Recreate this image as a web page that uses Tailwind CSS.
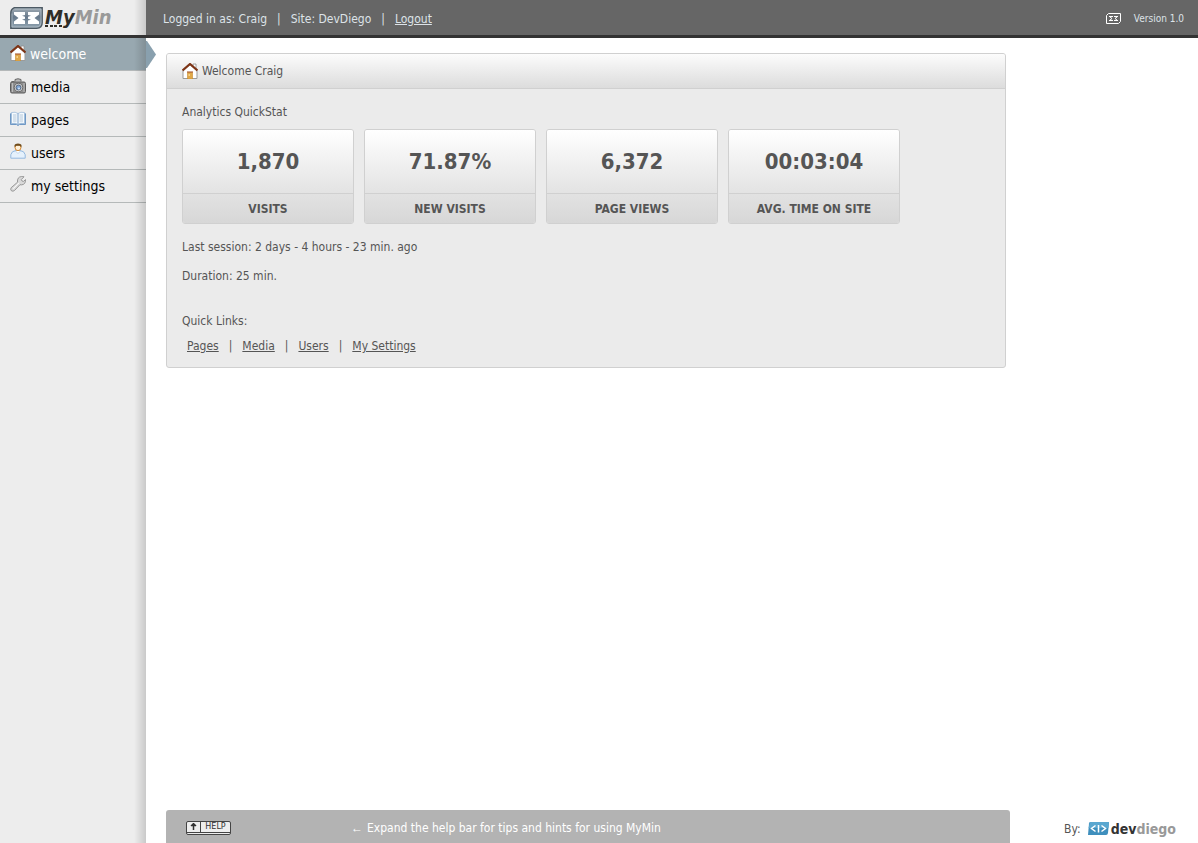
<!DOCTYPE html>
<html lang="en">
  <head>
    <meta charset="UTF-8" />
    <meta name="viewport" content="width=device-width, initial-scale=1.0" />
    <script src="https://cdn.jsdelivr.net/npm/@tailwindcss/browser@4"></script>
    <title>MyMin</title>
  </head>
  <body class="flex flex-col min-h-screen bg-white font-['DejaVu_Sans_Condensed','DejaVu_Sans',sans-serif] text-[12px] leading-4 text-[#555]">
    <!-- shared house icon -->
    <svg class="hidden">
      <symbol id="house" viewBox="0 0 16 16">
        <path d="M11 1h3v5l-3-3z" fill="#fff" stroke="#8d8d8d" stroke-width=".8" />
        <path d="M1 8L8 1.500 15 8v7.500H1z" fill="#fff" stroke="#9b9b9b" />
        <path d="M5.500 9.500h5V16h-5z" fill="#e0a848" stroke="#c98a2c" stroke-width=".6" />
        <path d="M6.500 11h1.500v2h-1.500z" fill="#f5d08a" />
        <path d="M5 9h6" stroke="#a34a1c" />
        <path d="M0.500 7.500L8 1l7.500 6.500" fill="none" stroke="#7e3516" stroke-width="2.200" />
      </symbol>
    </svg>

    <header class="flex h-[38px] border-b-3 border-[#333] bg-[#666] text-[#dde3e8]">
      <a href="#" class="relative flex w-[146px] shrink-0 items-center bg-[#ededed] pl-[10px]">
        <svg class="h-[22px] w-[33px]" viewBox="0 0 33 22">
          <defs>
            <linearGradient id="badge" x1="0" y1="0" x2="0" y2="1">
              <stop offset="0" stop-color="#a3adb5" />
              <stop offset=".45" stop-color="#66788a" />
              <stop offset="1" stop-color="#93a6b3" />
            </linearGradient>
          </defs>
          <path d="M4 .8h28.200v14.700q0 5.700-5.500 5.700H.8V6q0-4 3.200-5.200z" fill="url(#badge)" stroke="#4d5a64" stroke-width="1.400" />
          <path d="M4.500 2h26.500v13q0 5-5 5H2V6.500" fill="none" stroke="#b4c0c9" stroke-width=".8" />
          <path d="M4 5h11v3l-3 .8 3 1v2l-3 1 3 .8V17H4v-2.500L8.500 11 4 7.500zM18 5h11v2.500L24.500 11l4.500 3.500V17H18v-3.400l3-.8-3-1v-2l3-1-3-.8z" fill="#fff" />
        </svg>
        <span class="pl-[2px] pb-[2px] text-[20px] leading-5 font-bold italic text-[#2e2d28]">My<span class="text-[#999]">Min</span></span>
        <svg class="absolute left-[45px] top-[25px] h-[2px] w-[17px]" viewBox="0 0 17 2">
          <path d="M0 0h3v2H0zM5 0h3v2H5zM9 0h3v2H9zM14 0h3v2h-3z" fill="#2e2d28" />
        </svg>
        <span class="absolute inset-y-0 right-0 w-3 bg-linear-to-r from-transparent to-black/15"></span>
      </a>
      <div class="flex flex-1 items-center gap-[10px] pl-[17px] pt-[2px]">
        <span>Logged in as: Craig</span>
        <span>|</span>
        <span>Site: DevDiego</span>
        <span>|</span>
        <a href="#" class="underline">Logout</a>
      </div>
      <div class="flex items-center gap-[13px] pr-[14px] pt-[2px] text-[10px]">
        <svg class="h-[11px] w-[15px]" viewBox="0 0 15 11" fill="none" stroke="#fff">
          <path d="M2.500.5h12v8l-2 2H.5v-8z" />
          <path d="M3 3.500h4M3 7.500h4M4 4l2 1.500L4 7M8 3.500h4M8 7.500h4M11 4l-2 1.500 2 1.500" />
        </svg>
        <span>Version 1.0</span>
      </div>
    </header>

    <div class="flex flex-1">
      <nav class="relative w-[146px] shrink-0 bg-[#ededed] text-[14px] text-black">
        <a href="#" class="flex h-[33px] items-center gap-1 border-b border-[#b4b8b9] bg-[#98a8b0] pl-[10px] text-white">
          <svg class="mb-[2px] size-4"><use href="#house" /></svg>
          welcome
        </a>
        <a href="#" class="flex h-[33px] items-center gap-[5px] border-b border-[#b5b9b9] pl-[10px]">
          <svg class="mb-[2px] size-4" viewBox="0 0 16 16">
            <path d="M5 3.500V1.500q3-1.500 6 0v2" fill="#bbb" stroke="#666" />
            <path d="M1.500 3h3v2h-3z" fill="#777" />
            <rect x=".5" y="4" width="15" height="11" rx="1.500" fill="#8f8f8f" stroke="#5c5c5c" />
            <path d="M2.500 5v9M14 5v9" stroke="#bbb" />
            <circle cx="8.500" cy="9.500" r="4.300" fill="#d5d5d5" stroke="#666" />
            <circle cx="8.500" cy="9.500" r="2.500" fill="#7da3d3" stroke="#54657c" />
            <circle cx="9" cy="10.500" r="1" fill="#d3e5f8" />
          </svg>
          media
        </a>
        <a href="#" class="flex h-[33px] items-center gap-[5px] border-b border-[#b5b9b9] pl-[10px]">
          <svg class="mb-[2px] size-4" viewBox="0 0 16 16">
            <path d="M.5 2.500v11h6l1.500 1 1.500-1h6v-11" fill="#7ea6d0" stroke="#6f98c5" />
            <path d="M1.500 1.500Q5.500.5 8 2.500 10.500.5 14.500 1.500v11Q10.500 11.500 8 13.500 5.500 11.500 1.500 12.500z" fill="#f5fafe" stroke="#9dbad8" stroke-width=".8" />
            <path d="M8 2.500v11" stroke="#7ba0c9" />
            <path d="M3 4h3.500M3 6h3.500M3 8h3.500M3 10h3.500M9.500 4H13M9.500 6H13M9.500 8H13M9.500 10H13" stroke="#aec2d6" stroke-width=".9" />
          </svg>
          pages
        </a>
        <a href="#" class="flex h-[33px] items-center gap-[5px] border-b border-[#b5b9b9] pl-[10px]">
          <svg class="mb-1 size-4" viewBox="0 0 16 16">
            <path d="M.8 15.200v-3.500Q1.500 8 6 7.500h4q4.500.5 5.200 4.200v3.500z" fill="#e5f1fc" stroke="#94b9df" />
            <path d="M5.500 8L8 10.500 10.500 8" fill="#fff" stroke="#a8c6e4" stroke-width=".7" />
            <circle cx="8" cy="4.700" r="2.900" fill="#fff0d8" stroke="#d58a35" />
            <path d="M4.500 4.500V2Q5 .5 8 .5t3.500 1.500v2.500L10 2.800H6z" fill="#704c1b" />
          </svg>
          users
        </a>
        <a href="#" class="flex h-[33px] items-center gap-[5px] border-b border-[#b5b9b9] pl-[10px]">
          <svg class="mb-1 size-4" viewBox="0 0 16 16">
            <path d="M14 .8L11.300 3.500l.7 1.500 1.500.4 2-1.800q.3 5-4.200 5.300L10 8.700l-5.500 5.800q-1.500 1.300-3.200.2-1.200-1.500-.1-3L7.500 6.200Q7 1 11.500.5q1.500-.2 2.500.3z" fill="#d9d9d9" stroke="#8e8e8e" stroke-width=".9" />
            <path d="M3 12.800L9 6.800" stroke="#fff" />
          </svg>
          my settings
        </a>
        <span class="pointer-events-none absolute inset-y-0 right-0 w-3 bg-linear-to-r from-transparent to-black/15"></span>
        <svg class="absolute left-full top-[3px] h-[27px] w-[10px]" viewBox="0 0 10 27">
          <path d="M0 0h1l9 13.500L1 27H0z" fill="#89a0ae" />
        </svg>
      </nav>

      <div class="flex flex-1 flex-col justify-between pl-5">
        <main class="mt-[15px] mr-5 max-w-[840px] rounded-[3px] border border-[#d0d0d0] bg-[#ebebeb]">
          <h1 class="flex h-[35px] items-center gap-1 rounded-t-[2px] border-b border-[#d0d0d0] bg-linear-to-b from-[#fcfcfc] to-[#dcdcdc] pl-[15px]">
            <svg class="size-4"><use href="#house" /></svg>
            Welcome Craig
          </h1>
          <div class="px-[15px] pt-[15px] pb-[13px]">
            <h2>Analytics QuickStat</h2>
            <div class="mt-[9px] flex flex-wrap gap-[10px] text-center font-bold">
              <div class="w-[172px] overflow-hidden rounded-[3px] border border-[#d0d0d0]">
                <p class="bg-linear-to-b from-white to-[#e3e3e3] text-[22px] leading-[63px]">1,870</p>
                <p class="border-t border-[#d0d0d0] bg-linear-to-b from-[#e2e2e2] to-[#d7d7d7] pt-px leading-7">VISITS</p>
              </div>
              <div class="w-[172px] overflow-hidden rounded-[3px] border border-[#d0d0d0]">
                <p class="bg-linear-to-b from-white to-[#e3e3e3] text-[22px] leading-[63px]">71.87%</p>
                <p class="border-t border-[#d0d0d0] bg-linear-to-b from-[#e2e2e2] to-[#d7d7d7] pt-px leading-7">NEW VISITS</p>
              </div>
              <div class="w-[172px] overflow-hidden rounded-[3px] border border-[#d0d0d0]">
                <p class="bg-linear-to-b from-white to-[#e3e3e3] text-[22px] leading-[63px]">6,372</p>
                <p class="border-t border-[#d0d0d0] bg-linear-to-b from-[#e2e2e2] to-[#d7d7d7] pt-px leading-7">PAGE VIEWS</p>
              </div>
              <div class="w-[172px] overflow-hidden rounded-[3px] border border-[#d0d0d0]">
                <p class="bg-linear-to-b from-white to-[#e3e3e3] text-[22px] leading-[63px]">00:03:04</p>
                <p class="border-t border-[#d0d0d0] bg-linear-to-b from-[#e2e2e2] to-[#d7d7d7] pt-px leading-7">AVG. TIME ON SITE</p>
              </div>
            </div>
            <p class="mt-[15px]">Last session: 2 days - 4 hours - 23 min. ago</p>
            <p class="mt-[13px]">Duration: 25 min.</p>
            <p class="mt-[29px]">Quick Links:</p>
            <div class="mt-[9px] flex gap-[10px] pl-[5px]">
              <a href="#" class="underline">Pages</a>
              <span>|</span>
              <a href="#" class="underline">Media</a>
              <span>|</span>
              <a href="#" class="underline">Users</a>
              <span>|</span>
              <a href="#" class="underline">My Settings</a>
            </div>
          </div>
        </main>

        <footer class="flex h-[33px] items-center justify-between pr-[22px]">
          <div class="flex h-full w-[844px] items-center rounded-t-[3px] bg-[#b3b3b3] pl-5 pt-[2px] text-white">
            <button type="button" class="flex h-[14px] w-[45px] shrink-0 rounded-[2px] border border-[#444] bg-[#eee] text-[8px] leading-[10px] text-[#333]">
              <span class="flex h-[11px] w-[13px] items-center justify-center border-b border-[#444]">
                <svg class="h-[7px] w-[7px]" viewBox="0 0 7 7"><path d="M3 0h1v1h1v1h1v1H4v4H3V3H1V2h1V1h1z" fill="#333" stroke="#333" stroke-width=".5" /></svg>
              </span>
              <span class="h-[11px] flex-1 border-b border-l border-[#444] font-['DejaVu_Sans',sans-serif]">HELP</span>
            </button>
            <span class="flex items-center gap-1 pl-[120px]"><span class="font-['Liberation_Sans',sans-serif]">←</span> Expand the help bar for tips and hints for using MyMin</span>
          </div>
          <div class="flex items-center gap-[7px] pt-1">
            <span>By:</span>
            <a href="#" class="flex items-center gap-[2px] text-[14px] font-bold text-[#333]">
              <svg class="h-[13px] w-[21px]" viewBox="0 0 21 13">
                <path d="M2 0h19l-1 11q-.3 2-2 2H0L1 1.500Q1.200 0 2 0z" fill="#3f8fbd" />
                <path d="M2 0h19l-.6 6H.6z" fill="#5aa7d0" />
                <path d="M7.500 3.500L3.500 6.500l4 3M13.500 3.500l4 3-4 3M10.500 3v7.500" fill="none" stroke="#fff" stroke-width="1.500" />
              </svg>
              <span>dev<span class="text-[#999]">diego</span></span>
            </a>
          </div>
        </footer>
      </div>
    </div>
  </body>
</html>
